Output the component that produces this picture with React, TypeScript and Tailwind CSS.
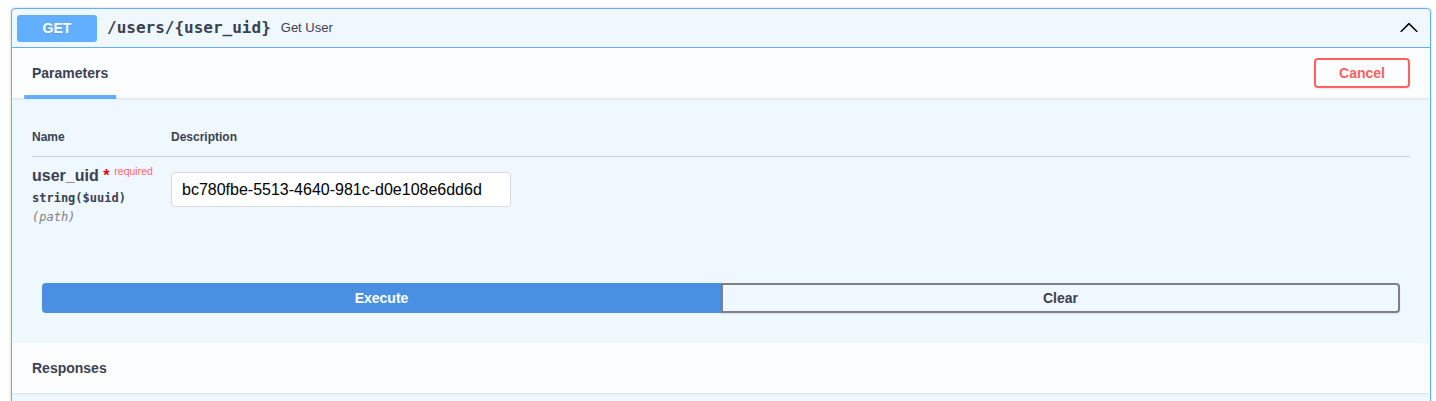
const sans = "font-['Liberation_Sans',Arial,sans-serif]";
const mono = "font-['DejaVu_Sans_Mono',monospace]";

function ChevronUp() {
  return (
    <svg width="20" height="20" viewBox="0 0 20 20" className="rotate-180" aria-hidden>
      <path
        fill="#000"
        d="M17.418 6.109c.272-.268.709-.268.979 0s.271.701 0 .969l-7.908 7.83c-.27.268-.707.268-.979 0l-7.908-7.83c-.27-.268-.27-.701 0-.969.271-.268.709-.268.979 0L10 13.25l7.418-7.141z"
      />
    </svg>
  );
}

export default function App() {
  return (
    <div className={`min-h-[401px] bg-white pt-[8px] pl-[11px] text-[#3b4151] ${sans}`}>
      <div className="w-[1420px] overflow-hidden rounded-[4px] border border-[#61affe] bg-[#eff7ff] shadow-[0_0_3px_rgba(0,0,0,0.19)]">
        {/* summary */}
        <div className="flex h-[39px] items-center border-b border-[#61affe] px-[5px]">
          <span className="flex h-[27px] w-[80px] items-center justify-center rounded-[3px] bg-[#61affe] text-[14px] font-bold text-white [text-shadow:0_1px_0_rgba(0,0,0,0.1)]">
            GET
          </span>
          <span className={`ml-[10px] text-[16px] font-bold ${mono}`}>/users/{"{user_uid}"}</span>
          <span className="ml-[10px] text-[13px]">Get User</span>
          <span className="ml-auto mr-[6px] flex">
            <ChevronUp />
          </span>
        </div>

        {/* parameters header */}
        <div className="flex h-[50px] items-center bg-[#fcfdff] px-[20px] shadow-[0_1px_2px_rgba(0,0,0,0.1)]">
          <h4 className="relative text-[14px] font-bold">
            Parameters
            <span className="absolute bottom-[-15px] left-1/2 h-[4px] w-[120%] -translate-x-1/2 bg-[#61affe]" />
          </h4>
          <button className="ml-auto h-[30px] rounded-[4px] border-2 border-[#ff6060] px-[23px] text-[14px] font-bold text-[#ff6060] shadow-[0_1px_2px_rgba(0,0,0,0.1)]">
            Cancel
          </button>
        </div>

        {/* parameters table */}
        <div className="px-[20px] pt-[20px] pb-[19px]">
          <div className="flex border-b border-[#cbd3dc] py-[12px] text-[12px] leading-[14px] font-bold">
            <div className="w-[139px]">Name</div>
            <div>Description</div>
          </div>
          <div className="flex py-[10px]">
            <div className="w-[139px] pr-[10px]">
              <div className="text-[16px] leading-[18px] font-bold whitespace-nowrap">
                user_uid
                <span className="text-red-600"> *</span>
                <span className="relative top-[-6px] px-[5px] text-[10.5px] font-normal text-[#ff6666]">required</span>
              </div>
              <div className={`py-[5px] text-[12px] leading-[14px] font-semibold ${mono}`}>string($uuid)</div>
              <div className={`text-[12px] leading-[14px] text-[#808080] italic ${mono}`}>(path)</div>
            </div>
            <div className="py-[5px]">
              <input
                readOnly
                value="bc780fbe-5513-4640-981c-d0e108e6dd6d"
                className="h-[35px] w-[340px] rounded-[4px] border border-[#d9d9d9] bg-white px-[10px] text-[16px] text-black outline-none"
              />
            </div>
          </div>
        </div>

        {/* buttons */}
        <div className="flex p-[30px]">
          <button className="h-[30px] flex-1 rounded-l-[4px] border-2 border-[#4990e2] bg-[#4990e2] text-[14px] font-bold text-white">
            Execute
          </button>
          <button className="h-[30px] flex-1 rounded-r-[4px] border-2 border-[#808080] text-[14px] font-bold shadow-[0_1px_2px_rgba(0,0,0,0.1)]">
            Clear
          </button>
        </div>

        {/* responses header */}
        <div className="flex h-[50px] items-center bg-[#fcfdff] px-[20px] shadow-[0_1px_2px_rgba(0,0,0,0.1)]">
          <h4 className="text-[14px] font-bold">Responses</h4>
        </div>
        <div className="h-[40px]" />
      </div>
    </div>
  );
}
